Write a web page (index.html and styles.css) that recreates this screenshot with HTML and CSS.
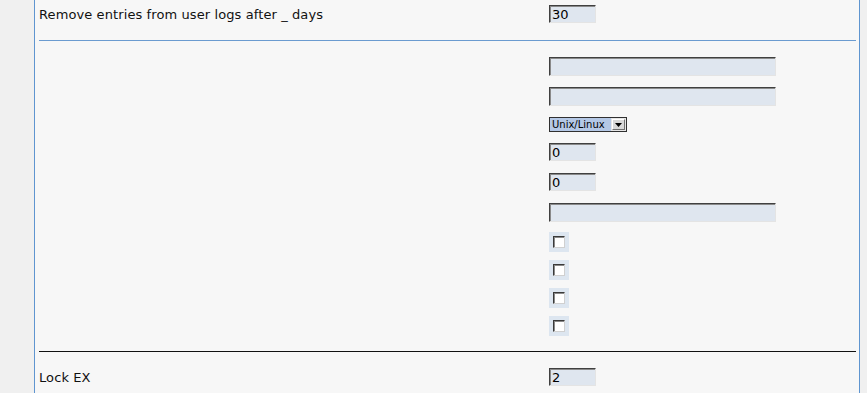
FILE: index.html
```html
<!DOCTYPE html>
<html lang="en">
<head>
    <meta charset="UTF-8">
    <title>Settings</title>
    <link rel="stylesheet" href="styles.css">
</head>
<body>

    <div class="panel">
        <div class="section first">
            <div class="row">
                <div class="label">Remove entries from user logs after _ days</div>
                <div class="value"><input class="field small" type="text" value="30"></div>
            </div>
        </div>

        <div class="rule blue"></div>

        <div class="section">
            <div class="row">
                <div class="label"></div>
                <div class="value"><input class="field wide" type="text" value=""></div>
            </div>
            <div class="row">
                <div class="label"></div>
                <div class="value"><input class="field wide" type="text" value=""></div>
            </div>
            <div class="row short">
                <div class="label"></div>
                <div class="value">
                    <span class="select">
                        <span class="select-text">Unix/Linux</span>
                        <span class="select-btn">
                            <svg width="7" height="4" viewBox="0 0 7 4"><path d="M0 0h7L3.5 4z" fill="#000"/></svg>
                        </span>
                    </span>
                </div>
            </div>
            <div class="row">
                <div class="label"></div>
                <div class="value"><input class="field small" type="text" value="0"></div>
            </div>
            <div class="row">
                <div class="label"></div>
                <div class="value"><input class="field small" type="text" value="0"></div>
            </div>
            <div class="row check-first">
                <div class="label"></div>
                <div class="value"><input class="field wide" type="text" value=""></div>
            </div>
            <div class="row check">
                <div class="label"></div>
                <div class="value"><span class="checkwrap"><span class="checkbox"></span></span></div>
            </div>
            <div class="row check">
                <div class="label"></div>
                <div class="value"><span class="checkwrap"><span class="checkbox"></span></span></div>
            </div>
            <div class="row check">
                <div class="label"></div>
                <div class="value"><span class="checkwrap"><span class="checkbox"></span></span></div>
            </div>
            <div class="row check">
                <div class="label"></div>
                <div class="value"><span class="checkwrap"><span class="checkbox"></span></span></div>
            </div>
        </div>

        <div class="rule dark"></div>

        <div class="section">
            <div class="row">
                <div class="label">Lock EX</div>
                <div class="value"><input class="field small" type="text" value="2"></div>
            </div>
        </div>
    </div>

</body>
</html>
```

FILE: styles.css
```css
body {
    margin: 0;
    background-color: #f0f0f0;
    font-family: "DejaVu Sans", Verdana, sans-serif;
    font-size: 13px;
    color: #000;
}

.panel {
    margin-left: 34px;
    width: 817px;
    min-height: 393px;
    padding: 0 3px 0 4px;
    background-color: #f7f7f7;
    border-left: 1px solid #5f95d0;
    border-right: 1px solid #5f95d0;
}

.section {
    padding-top: 16px;
}

.section.first {
    padding-top: 5px;
}

.row {
    display: flex;
    align-items: flex-start;
    height: 30px;
}

.row.short {
    height: 26px;
}

.row.check-first {
    height: 29px;
}

.row.check {
    height: 28px;
}

.label {
    width: 510px;
    flex: none;
    line-height: 19px;
    letter-spacing: 0.1px;
    color: #111;
}

.value {
    display: flex;
    align-items: flex-start;
}

.rule {
    height: 1px;
    margin-top: 5px;
}

.rule.blue {
    background-color: #6b9bd0;
}

.rule.dark {
    background-color: #111;
    margin-top: 7px;
}

.field {
    box-sizing: border-box;
    height: 19px;
    margin: 0;
    padding: 1px 2px 0;
    font-family: "DejaVu Sans", Verdana, sans-serif;
    font-size: 13px;
    color: #000;
    background-color: #dfe6ef;
    border: 1px solid;
    border-color: #404040 #e4e4e4 #e4e4e4 #404040;
    box-shadow: inset 1px 1px 0 #8a8a8a;
    outline: none;
}

.field.small {
    width: 47px;
    height: 18px;
}

.field.wide {
    width: 227px;
}

.select {
    display: flex;
    align-items: center;
    box-sizing: border-box;
    width: 78px;
    height: 15px;
    border: 1px solid #303030;
    background-color: #e6e6e6;
}

.select-text {
    flex: 1;
    height: 13px;
    padding-left: 2px;
    font-size: 10px;
    line-height: 13px;
    white-space: nowrap;
    overflow: hidden;
    background-color: #b4c8e6;
}

.select-btn {
    display: flex;
    align-items: center;
    justify-content: center;
    flex: none;
    box-sizing: border-box;
    width: 13px;
    height: 11px;
    margin: 0 1px;
    background-color: #d8d8d8;
    border: 1px solid;
    border-color: #fff #707070 #707070 #fff;
}

.checkwrap {
    display: flex;
    box-sizing: border-box;
    width: 20px;
    height: 20px;
    padding: 4px 0 0 4px;
    background-color: #dde6f0;
}

.checkbox {
    box-sizing: border-box;
    width: 12px;
    height: 12px;
    background-color: #fff;
    border: 1px solid;
    border-color: #3a3a3a #d0d0d0 #d0d0d0 #3a3a3a;
    box-shadow: inset 1px 1px 0 #8a8a8a;
}
```
